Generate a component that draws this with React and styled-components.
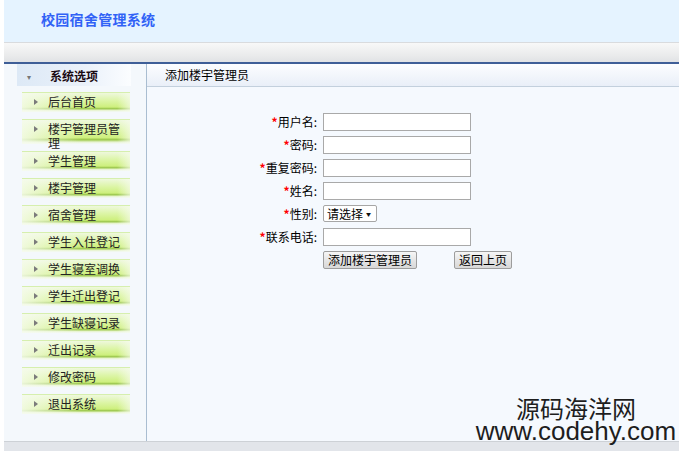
import React from 'react'
import styled, { createGlobalStyle } from 'styled-components'

const menu = [
  { name: '后台首页' },
  { name: '楼宇管理员管理', tall: true },
  { name: '学生管理' },
  { name: '楼宇管理' },
  { name: '宿舍管理' },
  { name: '学生入住登记' },
  { name: '学生寝室调换' },
  { name: '学生迁出登记' },
  { name: '学生缺寝记录' },
  { name: '迁出记录' },
  { name: '修改密码' },
  { name: '退出系统' },
]

const fields = [
  { label: '用户名', type: 'text' },
  { label: '密码', type: 'password' },
  { label: '重复密码', type: 'password' },
  { label: '姓名', type: 'text' },
  { label: '性别', type: 'select' },
  { label: '联系电话', type: 'text' },
]

function App() {
  return (
    <Page>
      <GlobalStyle />
      <Header>
        <Title>校园宿舍管理系统</Title>
      </Header>
      <Toolbar />
      <Body>
        <Side>
          <SideHead>
            <Caret>▾</Caret>
            <SideTitle>系统选项</SideTitle>
          </SideHead>
          <Menu>
            {menu.map(m => (
              <MenuItem key={m.name} tall={m.tall}>
                <Arrow />
                <MenuText>{m.name}</MenuText>
              </MenuItem>
            ))}
          </Menu>
        </Side>
        <Content>
          <ContentHead>添加楼宇管理员</ContentHead>
          <Form>
            {fields.map(f => (
              <React.Fragment key={f.label}>
                <Label>
                  <Star>*</Star>
                  {f.label}:
                </Label>
                <Field>
                  {f.type === 'select' ? (
                    <SelectWrap>
                      <Select defaultValue="">
                        <option value="">请选择</option>
                        <option value="男">男</option>
                        <option value="女">女</option>
                      </Select>
                      <SelectArrow>▼</SelectArrow>
                    </SelectWrap>
                  ) : (
                    <Input type={f.type} />
                  )}
                </Field>
              </React.Fragment>
            ))}
            <span />
            <Buttons>
              <Button>添加楼宇管理员</Button>
              <Button>返回上页</Button>
            </Buttons>
          </Form>
        </Content>
      </Body>
      <Footer />
      <Watermark>
        <WmCn>源码海洋网</WmCn>
        <WmUrl>www.codehy.com</WmUrl>
      </Watermark>
    </Page>
  )
}

export default App

const GlobalStyle = createGlobalStyle`
  html, body {
    margin: 0;
    padding: 0;
    background: #fff;
  }
  body {
    font-family: "Noto Sans CJK SC", "Liberation Sans", sans-serif;
    font-size: 12px;
    color: #000;
  }
`

const Page = styled.div`
  position: relative;
  margin-left: 4px;
  width: 675px;
  height: 451px;
  overflow: hidden;
`

const Header = styled.div`
  height: 42px;
  background: #e5f3ff;
  box-sizing: border-box;
  padding: 10px 0 0 37px;
`

const Title = styled.div`
  font-size: 14px;
  line-height: 18px;
  font-weight: bold;
  color: #3162f6;
  letter-spacing: 0.3px;
`

const Toolbar = styled.div`
  height: 19px;
  border-top: 1px solid #d9dbde;
  border-bottom: 2px solid #3e5e97;
  background: linear-gradient(to bottom, #f8f8f8, #e9eaeb 70%, #e0e2e5);
`

const Body = styled.div`
  display: flex;
  height: 377px;
  background: #f5f9fe;
`

const Side = styled.div`
  width: 142px;
  border-right: 1px solid #a9bdd1;
  background: #f4f8fc;
`

const SideHead = styled.div`
  margin-left: 13px;
  width: 114px;
  height: 22px;
  display: flex;
  align-items: center;
  background: linear-gradient(to right, #dde9f6, #eaf1fa 60%, #fbfdff);
`

const Caret = styled.i`
  font-style: normal;
  font-size: 8px;
  color: #777;
  margin: 3px 0 0 10px;
`

const SideTitle = styled.span`
  margin-left: 19px;
  font-weight: bold;
  color: #1a0a12;
`

const Menu = styled.div`
  padding-top: 6px;
`

const MenuItem = styled.div`
  position: relative;
  margin: 0 0 7px 18px;
  width: 108px;
  height: ${p => (p.tall ? 25 : 20)}px;
  box-sizing: border-box;
  border-top: 1px solid #d6efae;
  background:
    linear-gradient(to right, rgba(246, 251, 238, 0.85) 0%, rgba(246, 251, 238, 0) 55%, rgba(246, 251, 238, 0) 88%, rgba(246, 251, 238, 0.7) 100%),
    linear-gradient(to bottom, #eef8dc 0%, #dcf5a6 40%, #cdef7c 75%, #9cc84c 80%, #a9d060 84%, #e8f4d2 92%, #f4f8fc 100%);
`

const Arrow = styled.i`
  position: absolute;
  left: 12px;
  top: 6px;
  border-left: 4px solid #7b7b7b;
  border-top: 3px solid transparent;
  border-bottom: 3px solid transparent;
`

const MenuText = styled.div`
  padding: 2px 0 0 26px;
  width: 74px;
  line-height: 14px;
  color: #222;
`

const Content = styled.div`
  flex: 1;
`

const ContentHead = styled.div`
  height: 22px;
  line-height: 22px;
  padding-left: 18px;
  border-bottom: 1px solid #c3d0dd;
  background: linear-gradient(to bottom, #fcfdff, #e9eff8);
`

const Form = styled.div`
  display: grid;
  grid-template-columns: 100px auto;
  column-gap: 5px;
  row-gap: 5px;
  margin: 26px 0 0 71px;
`

const Label = styled.div`
  text-align: right;
  line-height: 18px;
  white-space: nowrap;
  padding-right: 1px;
`

const Star = styled.span`
  color: #ff0000;
  font-weight: bold;
`

const Field = styled.div`
  height: 18px;
`

const Input = styled.input`
  box-sizing: border-box;
  width: 148px;
  height: 18px;
  margin: 0;
  padding: 0 2px;
  border: 1px solid #a9a9a9;
  background: #fff;
  font: inherit;
`

const SelectWrap = styled.span`
  position: relative;
  display: inline-block;
`

const Select = styled.select`
  appearance: none;
  box-sizing: border-box;
  width: 54px;
  height: 17px;
  margin: 0;
  padding: 0 0 0 3px;
  border: 1px solid #a6a6a6;
  border-radius: 2px;
  background: #fff;
  font: inherit;
  font-size: 12px;
  line-height: 15px;
  color: #000;
`

const SelectArrow = styled.span`
  position: absolute;
  right: 6px;
  top: 5px;
  font-size: 5px;
  line-height: 7px;
  color: #111;
  pointer-events: none;
`

const Buttons = styled.div`
  display: flex;
  gap: 37px;
`

const Button = styled.button`
  box-sizing: border-box;
  height: 18px;
  margin: 0;
  padding: 0 4px;
  border: 1px solid #9d9d9d;
  border-radius: 2px;
  background: linear-gradient(to bottom, #f6f6f6, #e3e3e3 60%, #d8d8d8);
  font: inherit;
  font-size: 12px;
  line-height: 14px;
  color: #000;
`

const Footer = styled.div`
  height: 9px;
  border-top: 1px solid #cdd1d6;
  background: #e2e5ea;
`

const Watermark = styled.div`
  position: absolute;
  right: 0;
  top: 397px;
  width: 206px;
  text-align: center;
  color: #1e1e1e;
`

const WmCn = styled.div`
  font-family: "Noto Sans CJK SC", sans-serif;
  font-size: 24px;
  line-height: 22px;
`

const WmUrl = styled.div`
  font-family: "Liberation Sans", Arial, sans-serif;
  font-size: 26px;
  line-height: 24px;
`
